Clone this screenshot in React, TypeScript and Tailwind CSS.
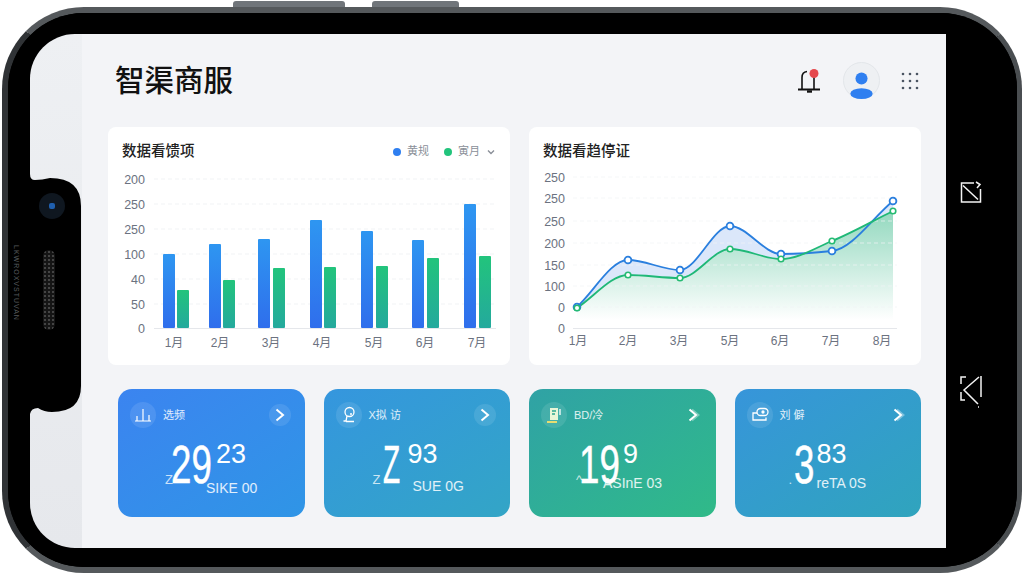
type Pt = [number, number];

const FONT = "[font-family:'Liberation_Sans','Noto_Sans_CJK_SC',sans-serif]";

// monotone curve through the points, flat at peaks and dips
function curve(pts: Pt[]) {
  const slopes = pts.slice(1).map((p, i) => (p[1] - pts[i][1]) / (p[0] - pts[i][0]));
  const t = pts.map((_, i) => {
    if (i === 0) return slopes[0];
    if (i === pts.length - 1) return slopes[i - 1];
    const a = slopes[i - 1];
    const b = slopes[i];
    return a * b <= 0 ? 0 : (2 * a * b) / (a + b);
  });
  let d = `M${pts[0][0]} ${pts[0][1]}`;
  for (let i = 1; i < pts.length; i++) {
    const [x0, y0] = pts[i - 1];
    const [x1, y1] = pts[i];
    const h = (x1 - x0) / 3;
    d += ` C${x0 + h} ${y0 + t[i - 1] * h} ${x1 - h} ${y1 - t[i] * h} ${x1} ${y1}`;
  }
  return d;
}

const barRows = [
  { label: "1月", cx: 174, bx: 163, gx: 177, b: 254, g: 290 },
  { label: "2月", cx: 220, bx: 209, gx: 223, b: 244, g: 280 },
  { label: "3月", cx: 271, bx: 258, gx: 273, b: 239, g: 268 },
  { label: "4月", cx: 322, bx: 310, gx: 324, b: 220, g: 267 },
  { label: "5月", cx: 374, bx: 361, gx: 376, b: 231, g: 266 },
  { label: "6月", cx: 425, bx: 412, gx: 427, b: 240, g: 258 },
  { label: "7月", cx: 477, bx: 464, gx: 479, b: 204, g: 256 },
];

const barAxis: [string, number][] = [
  ["200", 179],
  ["250", 204],
  ["250", 229],
  ["100", 254],
  ["40", 279],
  ["50", 304],
  ["0", 328],
];

const lineAxis: [string, number][] = [
  ["250", 177],
  ["250", 198],
  ["250", 221],
  ["200", 243],
  ["150", 265],
  ["100", 286],
  ["0", 307],
  ["0", 328],
];

const lineMonths: [string, number][] = [
  ["1月", 578],
  ["2月", 628],
  ["3月", 679],
  ["5月", 730],
  ["6月", 780],
  ["7月", 831],
  ["8月", 882],
];

const bluePts: Pt[] = [[577, 307], [628, 260], [680, 270], [730, 226], [781, 254], [832, 251], [893, 201]];
const greenPts: Pt[] = [[577, 308], [628, 275], [680, 278], [730, 249], [781, 259], [832, 241], [893, 211]];

function BarChart() {
  return (
    <svg viewBox="108 173 402 192" className="block h-[192px] w-[402px] overflow-visible">
      <defs>
        <linearGradient id="barBlue" x1="0" y1="0" x2="0" y2="1">
          <stop offset="0" stopColor="#2e96f1" />
          <stop offset="1" stopColor="#2f6eec" />
        </linearGradient>
        <linearGradient id="barGreen" x1="0" y1="0" x2="0" y2="1">
          <stop offset="0" stopColor="#22c47c" />
          <stop offset="1" stopColor="#24a99d" />
        </linearGradient>
      </defs>
      {barAxis.map(([label, y], i) => (
        <g key={i}>
          {i < 6 && <line x1="154" x2="496" y1={y} y2={y} stroke="#f1f3f5" strokeDasharray="4 3" />}
          <text x="145" y={y + 4.5} textAnchor="end" fontSize="12.5" fill="#6b7280">
            {label}
          </text>
        </g>
      ))}
      <line x1="154" x2="496" y1="328.5" y2="328.5" stroke="#e5e7eb" />
      {barRows.map((r) => (
        <g key={r.label}>
          <rect x={r.bx} y={r.b} width="12" height={328 - r.b} rx="1" fill="url(#barBlue)" />
          <rect x={r.gx} y={r.g} width="12" height={328 - r.g} rx="1" fill="url(#barGreen)" />
          <text x={r.cx} y="347" textAnchor="middle" fontSize="12" fill="#6b7280">
            {r.label}
          </text>
        </g>
      ))}
    </svg>
  );
}

function LineChart() {
  const blue = curve(bluePts);
  const green = curve(greenPts);
  const greenArea = `${green} L893 320 L577 320 Z`;
  return (
    <svg viewBox="529 173 392 192" className="block h-[192px] w-[392px] overflow-visible">
      <defs>
        <linearGradient id="areaGreen" gradientUnits="userSpaceOnUse" x1="0" y1="211" x2="0" y2="320">
          <stop offset="0" stopColor="#2fb583" stopOpacity="0.52" />
          <stop offset="1" stopColor="#2fb583" stopOpacity="0" />
        </linearGradient>
      </defs>
      <path d={`${blue} L893 320 L577 320 Z`} fill="#dbe7fa" />
      {/* white under the green so the blue only shows between the two lines */}
      <path d={greenArea} fill="#fff" />
      <path d={greenArea} fill="url(#areaGreen)" />
      {lineAxis.map(([label, y], i) => (
        <g key={i}>
          {i < 7 && <line x1="573" x2="897" y1={y} y2={y} stroke="#f1f3f5" strokeOpacity="0.7" strokeDasharray="4 3" />}
          <text x="565" y={y + 4.5} textAnchor="end" fontSize="12.5" fill="#6b7280">
            {label}
          </text>
        </g>
      ))}
      <line x1="573" x2="897" y1="328.5" y2="328.5" stroke="#e5e7eb" />
      <path d={blue} fill="none" stroke="#2a7fde" strokeWidth="1.8" />
      <path d={green} fill="none" stroke="#1fb877" strokeWidth="1.8" />
      {bluePts.map(([x, y]) => (
        <circle key={x} cx={x} cy={y} r="3.4" fill="#fff" stroke="#2a7fde" strokeWidth="1.8" />
      ))}
      {greenPts.map(([x, y]) => (
        <circle key={x} cx={x} cy={y} r="2.8" fill="#fff" stroke="#25bb72" strokeWidth="1.6" />
      ))}
      {lineMonths.map(([label, x]) => (
        <text key={label} x={x} y="345" textAnchor="middle" fontSize="12" fill="#6b7280">
          {label}
        </text>
      ))}
    </svg>
  );
}

function ChartIcon() {
  return (
    <svg viewBox="0 0 20 20" className="h-5 w-5" fill="none" stroke="#fff" strokeWidth="1.2">
      <path d="M2 16h16M4 16v-5M10 16V4M16 16v-6" />
    </svg>
  );
}

function PersonIcon() {
  return (
    <svg viewBox="0 0 20 20" className="h-5 w-5" fill="none" stroke="#fff" strokeWidth="1.3">
      <circle cx="10.5" cy="7" r="4.5" />
      <path d="M8 11l-1 5H4.5M7 16.5h8M11 9l2 0" />
    </svg>
  );
}

function DocIcon() {
  return (
    <svg viewBox="0 0 20 20" className="h-5 w-5" fill="none">
      <path d="M6 3h8v12H6z" fill="#e8f6d8" />
      <path d="M8 6h4M8 9h3" stroke="#2ca58d" strokeWidth="1.3" />
      <path d="M3 17h10" stroke="#e5dd70" strokeWidth="2" />
      <path d="M16 4v6" stroke="#fff" strokeWidth="1.3" />
    </svg>
  );
}

function CardIcon() {
  return (
    <svg viewBox="0 0 20 20" className="h-5 w-5" fill="none" stroke="#fff" strokeWidth="1.3">
      <rect x="7" y="3.5" width="11" height="7" rx="3.5" />
      <path d="M7 8H3v7h13v-2.5" />
      <circle cx="13" cy="7" r="1" fill="#fff" />
    </svg>
  );
}

const stats = [
  {
    icon: <ChartIcon />,
    label: "选频",
    bg: "bg-gradient-to-br from-[#3b84f0] to-[#2f95e6]",
    row: "pl-[47px]",
    mark: "Z",
    markBox: "w-[6px]",
    big: "29",
    bigBox: "w-[41px] scale-x-[.68]",
    sup: "23",
    col: "ml-[4px]",
    sub: "SIKE 00",
    subBox: "-ml-[10px] mt-[13px]",
    pill: true,
  },
  {
    icon: <PersonIcon />,
    label: "X拟 访",
    bg: "bg-gradient-to-br from-[#3596de] to-[#33a5c6]",
    row: "pl-[49px]",
    mark: "Z",
    markBox: "w-[10px]",
    big: "Z",
    bigBox: "w-[16px] scale-x-[.52]",
    sup: "93",
    col: "ml-[9px]",
    sub: "SUE 0G",
    subBox: "ml-[5px] mt-[11px]",
    pill: true,
  },
  {
    icon: <DocIcon />,
    label: "BD/冷",
    bg: "bg-gradient-to-br from-[#30a2a5] to-[#30ba88]",
    row: "pl-[47px]",
    mark: "^",
    markBox: "w-[3px]",
    big: "19",
    bigBox: "w-[40px] scale-x-[.68]",
    sup: "9",
    col: "ml-[4px]",
    sub: "ASInE 03",
    subBox: "-ml-[20px] mt-[8px]",
    pill: false,
  },
  {
    icon: <CardIcon />,
    label: "刘 僻",
    bg: "bg-gradient-to-br from-[#3795da] to-[#30a4bd]",
    row: "pl-[54px]",
    mark: ".",
    markBox: "w-[5px]",
    big: "3",
    bigBox: "w-[20px] scale-x-[.68]",
    sup: "83",
    col: "ml-[3px]",
    sub: "reTA 0S",
    subBox: "ml-0 mt-[8px]",
    pill: false,
  },
];

function StatCard({ s }: { s: (typeof stats)[number] }) {
  return (
    <div className={`h-[128px] overflow-hidden rounded-[14px] pt-[13px] text-white ${s.bg}`}>
      <div className={`flex h-[26px] items-center justify-between pl-[12px] ${s.pill ? "pr-[14px]" : "pr-[12px]"}`}>
        <div className="flex items-center gap-[7px]">
          <div className="flex h-[26px] w-[26px] items-center justify-center rounded-full bg-white/10">{s.icon}</div>
          <span className="text-[11px] text-white/85">{s.label}</span>
        </div>
        <div className={`flex h-[22px] w-[22px] items-center justify-center rounded-full ${s.pill ? "bg-white/10" : ""}`}>
          <svg viewBox="0 0 14 14" className="h-[14px] w-[14px]" fill="none" stroke="#fff" strokeWidth="2">
            {!s.pill && <path d="M6 1.5 12.5 7 6 12.5" strokeOpacity="0.35" />}
            <path d="M3.5 1.5 10 7l-6.5 5.5" />
          </svg>
        </div>
      </div>
      <div className={`mt-[9px] flex items-start ${s.row}`}>
        <span className={`mt-[36px] text-[13px] leading-none text-white/75 ${s.markBox}`}>{s.mark}</span>
        <span className={`block origin-left text-[54px] leading-none [-webkit-text-stroke:0.5px_white] ${s.bigBox}`}>{s.big}</span>
        <div className={`flex flex-col ${s.col}`}>
          <span className="mt-[4px] text-[27px] leading-none">{s.sup}</span>
          <span className={`text-[14px] leading-none whitespace-nowrap text-white/85 ${s.subBox}`}>{s.sub}</span>
        </div>
      </div>
    </div>
  );
}

function Notch() {
  return (
    <svg viewBox="0 0 52 250" className="absolute top-[136px] left-0 h-[250px] w-[52px]" fill="#000">
      <path d="M0 0V4Q0 10 5 10Q12 10 20 8Q51 8 51 36V216Q51 242 22 242Q14 242 8 238Q1 238 0 244V250H0Z" />
    </svg>
  );
}

export default function App() {
  return (
    <div className={`h-[576px] w-[1024px] overflow-hidden bg-white pt-[7px] pl-[2px] ${FONT}`}>
      <div className="relative h-[566px] w-[1020px] rounded-[82px] border-t-[6px] border-r-[5px] border-b-[6px] border-l-[6px] border-t-[#55595c] border-r-[#4a4e51] border-b-[#55595c] border-l-[#303336] bg-black">
        {/* side buttons on the top edge */}
        <div className="absolute -top-[12px] left-[225px] h-[6px] w-[112px] rounded-t-[3px] bg-[#70757a]" />
        <div className="absolute -top-[12px] left-[364px] h-[6px] w-[87px] rounded-t-[3px] bg-[#70757a]" />

        <div className="flex h-full w-full rounded-[76px] bg-black pt-[21px] pl-[22px]">
          <div className="relative flex h-[514px] w-[916px] shrink-0">
            <div className="w-[52px] shrink-0 rounded-l-[45px] bg-gradient-to-b from-[#eef0f3] to-[#e6e8ec]" />
            <main className="w-[864px] bg-[#f3f4f7] pr-[25px] pl-[26px]">
              <header className="flex h-[93px] items-center justify-between pr-[2px] pl-[7px]">
                <h1 className="pb-[4px] text-[29.5px] leading-none font-medium text-[#111] [font-family:'Noto_Sans_CJK_SC',sans-serif]">
                  智渠商服
                </h1>
                <div className="flex items-center">
                  <svg viewBox="0 0 26 26" className="h-[26px] w-[26px]" fill="none" stroke="#111" strokeWidth="1.6">
                    <path d="M2 21.5h22" strokeWidth="2" />
                    <path d="M6 21V9.5Q6 4 11 3.5" />
                    <path d="M18 9v12" />
                    <path d="M11 23.5h5" strokeWidth="2.4" />
                    <circle cx="18" cy="5.5" r="4.5" fill="#e5484d" stroke="none" />
                  </svg>
                  <div className="ml-[21px] flex h-[37px] w-[37px] items-center justify-center rounded-full border border-[#e3e6ea] bg-[#eef0f3]">
                    <svg viewBox="0 0 36 36" className="h-[36px] w-[36px]">
                      <circle cx="18" cy="15.5" r="6.2" fill="#2f7ff0" />
                      <ellipse cx="18" cy="31" rx="11.5" ry="5.5" fill="#2f7ff0" />
                    </svg>
                  </div>
                  <svg viewBox="0 0 18 18" className="ml-[21px] h-[18px] w-[18px]" fill="#4b5563">
                    {[2, 9, 16].flatMap((y) =>
                      [2, 9, 16].map((x) => <circle key={`${x}-${y}`} cx={x} cy={y} r="1.3" />),
                    )}
                  </svg>
                </div>
              </header>

              <div className="grid grid-cols-[402px_392px] gap-[19px]">
                <section className="h-[238px] rounded-[8px] bg-white">
                  <div className="flex h-[46px] items-center justify-between pt-[3px] pr-[14px] pl-[14px]">
                    <h2 className="text-[14.5px] font-medium text-[#222]">数据看馈项</h2>
                    <div className="flex items-center text-[11px] text-[#8a8f98]">
                      <span className="h-[8px] w-[8px] rounded-full bg-[#2f7ff0]" />
                      <span className="ml-[6px]">黄规</span>
                      <span className="ml-[15px] h-[8px] w-[8px] rounded-full bg-[#22c47c]" />
                      <span className="ml-[6px]">寅月</span>
                      <svg viewBox="0 0 10 10" className="ml-[6px] h-[10px] w-[10px]" fill="none" stroke="#8a8f98" strokeWidth="1.4">
                        <path d="M2 3.5 5 6.5l3-3" />
                      </svg>
                    </div>
                  </div>
                  <BarChart />
                </section>
                <section className="h-[238px] rounded-[8px] bg-white">
                  <div className="flex h-[46px] items-center pt-[3px] pl-[14px]">
                    <h2 className="text-[14.5px] font-medium text-[#222]">数据看趋停证</h2>
                  </div>
                  <LineChart />
                </section>
              </div>

              <div className="mt-[24px] grid grid-cols-4 gap-[19px] pl-[10px]">
                {stats.map((s) => (
                  <StatCard key={s.label} s={s} />
                ))}
              </div>
            </main>
            <Notch />
          </div>

          {/* icons on the right bezel */}
          <div className="flex flex-1 flex-col items-center pt-[147px] pr-[22px]">
            <svg viewBox="0 0 22 22" className="h-[22px] w-[22px]" fill="none" stroke="#f4f4f4" strokeWidth="1.5">
              <path d="M14 2H1.5v19h19V8" />
              <path d="M3 4.5l15 14" />
              <path d="M16 1l4 2.5L17 7" />
            </svg>
            <svg viewBox="0 0 24 34" className="mt-[171px] h-[34px] w-[24px]" fill="none" stroke="#f4f4f4" strokeWidth="1.5">
              <path d="M7 3H2v7M2 18v8h4" />
              <path d="M20 3 5 16l14 14" />
              <path d="M22 2v21" />
              <path d="M19 33h1" />
            </svg>
          </div>
        </div>

        {/* front camera, speaker and the small print beside them */}
        <div className="absolute top-[180px] left-[31px] flex h-[26px] w-[26px] items-center justify-center rounded-full bg-[#0f1720]">
          <span className="h-[6px] w-[6px] rounded-[2px] bg-[#1f5fae]" />
        </div>
        <div className="absolute top-[237px] left-[35px] h-[80px] w-[12px] rounded-[6px] bg-[#151515] bg-[radial-gradient(circle,#444_1px,transparent_1.2px)] bg-[length:4px_4px]" />
        <span className="absolute top-[232px] left-[2px] text-[7px] tracking-[1px] text-[#55595c] [writing-mode:vertical-rl]">
          LKWROXVSTUVAN
        </span>
      </div>
    </div>
  );
}
